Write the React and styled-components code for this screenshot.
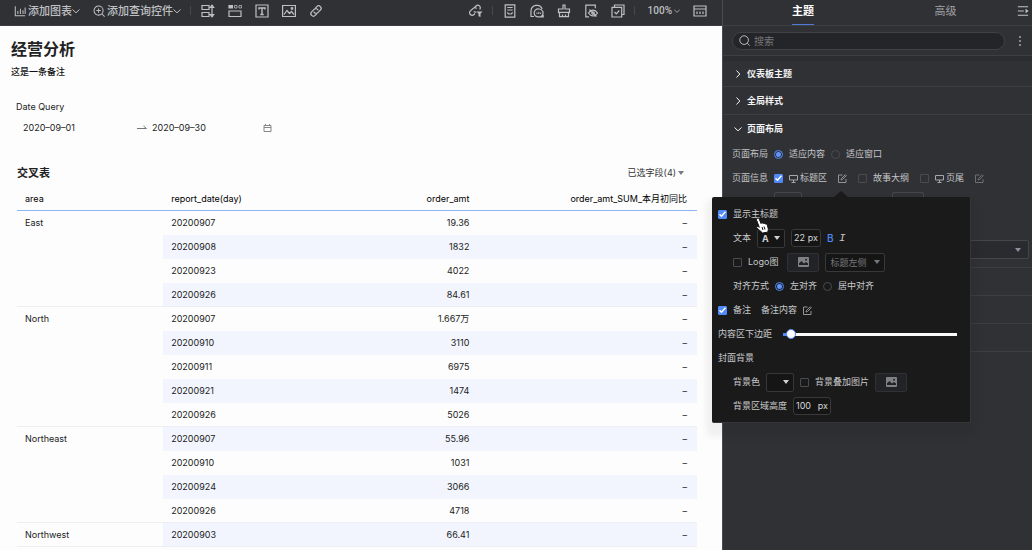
import React from "react";
import styled, { createGlobalStyle, css } from "styled-components";

const GlobalStyle = createGlobalStyle`
  * { box-sizing: border-box; }
  body {
    margin: 0;
    background: #303135;
    color: #222;
    font: 9px/24px Inter, "Noto Sans CJK SC", sans-serif;
    overflow: hidden;
  }
  button, input, select {
    font: inherit;
    color: inherit;
    margin: 0;
    padding: 0;
    border: 0;
    background: none;
  }
  h1, h2, h3, p { margin: 0; }
  svg { display: block; flex: none; }
`;

const Page = styled.div`
  display: grid;
  grid-template-columns: minmax(0, 1fr) 310px;
  height: 100vh;
  overflow: hidden;
`;

/* ---------- canvas side ---------- */

const Main = styled.main`
  background: #fdfdfd;
  overflow: hidden;
`;

const Toolbar = styled.header`
  display: flex;
  align-items: center;
  justify-content: space-between;
  height: 26px;
  padding: 0 15px 4px 14px;
  background: #303135;
  border-bottom: 1px solid #3b3c40;
  color: #bfc0c3;
`;

const ToolGroup = styled.div`
  display: flex;
  align-items: center;
  gap: 13px;
`;

const TextTool = styled.button`
  display: flex;
  align-items: center;
  gap: 2px;
  height: 16px;
  margin-left: ${(p) => (p.$latin ? 3 : 0)}px;
  font-family: ${(p) => (p.$latin ? "Roboto, sans-serif" : "inherit")};
  font-size: ${(p) => (p.$latin ? 10 : 11)}px;
  font-weight: 500;
  line-height: 16px;
  white-space: nowrap;
  span + svg { margin-left: -2px; }
`;

const IconTool = styled.button`
  display: flex;
  align-items: center;
  justify-content: center;
  width: 14px;
  height: 14px;
`;

const Divider = styled.i`
  width: 1px;
  height: 9px;
  margin: 0 -3px 0 -4px;
  background: #47484c;
`;

const Heading = styled.div`
  padding: 11px 11px 0;
  h1 { margin-bottom: 1px; font-size: 16px; line-height: 24px; font-weight: 700; color: #222; }
  p { line-height: 20px; font-weight: 500; color: #111; }
`;

const Query = styled.section`
  padding: 17px 16px 0;
  line-height: 16px;
`;

const DateRange = styled.div`
  display: flex;
  align-items: center;
  width: 256px;
  height: 16px;
  margin-top: 5px;
  padding-left: 7px;
  gap: 5px;
`;

const DateInput = styled.input`
  width: 109px;
  min-width: 0;
  height: 16px;
  outline: none;
  & + svg + & { width: 106px; }
`;

const Report = styled.section`
  padding: 27px 25px 0 17px;
`;

const ReportHead = styled.div`
  display: flex;
  justify-content: space-between;
  align-items: center;
  height: 20px;
  padding-right: 12px;
  h2 { font-size: 11px; line-height: 20px; font-weight: 700; }
`;

const FieldPicker = styled.button`
  display: flex;
  align-items: center;
  gap: 1px;
  line-height: 20px;
  color: #333;
`;

const DataTable = styled.table`
  width: 100%;
  margin-top: 4px;
  border-collapse: separate;
  border-spacing: 0;
  table-layout: fixed;
`;

const HeadCell = styled.th`
  height: 24px;
  padding: 0 10px 0 8px;
  border-bottom: 1px solid #8fb4f7;
  font-weight: 400;
  line-height: 22px;
  text-align: ${(p) => (p.$right ? "right" : "left")};
  white-space: nowrap;
  color: #000;
`;

const Cell = styled.td`
  height: 24px;
  padding: 0 10px 0 8px;
  line-height: 23px;
  vertical-align: top;
  text-align: ${(p) => (p.$right ? "right" : "left")};
  background: ${(p) => (p.$striped ? "#f2f5fe" : "transparent")};
  ${(p) => p.$last && css`border-bottom: 1px solid #eceef2;`}
`;

/* ---------- settings side ---------- */

const Side = styled.aside`
  position: relative;
  min-width: 0;
  background: #303135;
  border-left: 1px solid #4a4b4f;
  color: #c4c5c8;
`;

const Tabs = styled.nav`
  display: grid;
  grid-template-columns: 160px 1fr 24px;
  height: 26px;
  border-bottom: 1px solid #3e3f43;
`;

const Tab = styled.button`
  position: relative;
  padding-bottom: 2px;
  font-size: 11px;
  line-height: 21px;
  font-weight: ${(p) => (p.$active ? 700 : 400)};
  color: ${(p) => (p.$active ? "#fff" : "#a0a1a5")};
  &::after {
    content: "";
    position: absolute;
    left: 50%;
    bottom: 0;
    width: 22px;
    height: 1px;
    margin-left: -11px;
    background: ${(p) => (p.$active ? "#5279d8" : "transparent")};
  }
`;

const CollapseButton = styled.button`
  display: flex;
  align-items: center;
  justify-content: flex-end;
  padding: 0 3px 4px 0;
`;

const SearchRow = styled.div`
  display: flex;
  align-items: center;
  justify-content: space-between;
  height: 30px;
  padding: 0 10px 0 9px;
  border-bottom: 1px solid #3e3f43;
`;

const SearchBox = styled.label`
  display: flex;
  align-items: center;
  gap: 4px;
  flex: 1;
  height: 18px;
  margin-right: 13px;
  padding: 0 6px;
  border: 1px solid #404145;
  border-radius: 9px;
  background: #242528;
  input {
    flex: 1;
    min-width: 0;
    height: 16px;
    font-size: 10px;
    outline: none;
  }
  input::placeholder { color: #77787c; opacity: 1; }
`;

const Sections = styled.div`
  border-top: 5px solid #2c2d30;
`;

const SectionBar = styled.button`
  display: flex;
  align-items: center;
  gap: 5px;
  width: 100%;
  height: ${(p) => p.$height || 28}px;
  padding: 0 11px;
  border-top: 1px solid ${(p) => (p.$plain ? "transparent" : "#3d3e42")};
  font-weight: 700;
  line-height: 20px;
  color: #f4f4f5;
`;

const FormRow = styled.div`
  display: flex;
  align-items: center;
  height: 24px;
  padding-left: ${(p) => p.$indent || 0}px;
  gap: ${(p) => p.$gap || 6}px;
  white-space: nowrap;
`;

const SettingRows = styled.div`
  padding: 0 4px 0 9px;
`;

const Inline = styled.span`
  display: flex;
  align-items: center;
  gap: ${(p) => p.$gap || 2}px;
`;

const Option = styled.label`
  display: flex;
  align-items: center;
  gap: 6px;
  margin-right: ${(p) => p.$after || 0}px;
`;

const Check = styled.input.attrs({ type: "checkbox" })`
  appearance: none;
  flex: none;
  width: 9px;
  height: 9px;
  border: 1px solid #4a4b4f;
  border-radius: 1px;
  &:checked {
    border-color: #5189f8;
    background: #5189f8
      url("data:image/svg+xml,%3Csvg xmlns='http://www.w3.org/2000/svg' viewBox='0 0 9 9'%3E%3Cpath d='M1.5 4.2l2 2.1L7.4 1.8' fill='none' stroke='white' stroke-width='1.4'/%3E%3C/svg%3E")
      center / 9px 9px;
  }
`;

const Radio = styled.input.attrs({ type: "radio" })`
  appearance: none;
  flex: none;
  width: 9px;
  height: 9px;
  border: 1px solid #4a4b4f;
  border-radius: 50%;
  &:checked {
    border-color: #5189f8;
    background: radial-gradient(circle, #5f94fb 2px, transparent 3px);
  }
`;

const Picker = styled.button`
  display: flex;
  align-items: center;
  justify-content: ${(p) => (p.$end ? "flex-end" : "space-between")};
  width: ${(p) => p.$width}px;
  height: 19px;
  padding: 0 3px 0 4px;
  border: 1px solid #37383a;
  border-radius: 2px;
  line-height: 17px;
  color: ${(p) => (p.$dim ? "#77787a" : "#d0d1d3")};
  background: #151515;
`;

const WidePicker = styled(Picker)`
  width: 100%;
  padding-right: 6px;
  border-color: #44464a;
  background: #2a2b2e;
`;

const HiddenFields = styled.div`
  display: flex;
  gap: 90px;
  margin-top: 2px;
  padding-left: 51px;
  i {
    width: 28px;
    height: 18px;
    border: 1px solid #46474b;
    border-radius: 2px;
  }
  i + i { width: 32px; }
`;

const PickerSlot = styled.div`
  margin-top: 30px;
  padding: 0 3px 8px 9px;
`;

const SizeField = styled.label`
  display: flex;
  align-items: center;
  justify-content: space-between;
  width: ${(p) => p.$width}px;
  height: 18px;
  padding: 0 2px;
  border: 1px solid #38393b;
  border-radius: 3px;
  background: #151515;
  line-height: 16px;
  color: #d6d7d9;
  input { width: ${(p) => p.$inner}px; height: 16px; outline: none; }
`;

const ImageButton = styled.button`
  display: flex;
  align-items: center;
  justify-content: center;
  width: 32px;
  height: 19px;
  border: 1px solid #303136;
  border-radius: 2px;
  background: #222327;
`;

const StyleButton = styled.button`
  width: 6px;
  font-family: ${(p) => (p.$italic ? '"Liberation Mono", monospace' : "inherit")};
  font-size: ${(p) => (p.$italic ? 11 : 10)}px;
  font-style: ${(p) => (p.$italic ? "italic" : "normal")};
  font-weight: ${(p) => (p.$italic ? 400 : 500)};
  color: ${(p) => (p.$italic ? "#c4c5c8" : "#5189f8")};
`;

const Popover = styled.div`
  position: absolute;
  top: 197px;
  right: 61px;
  width: 259px;
  padding: 5px 5px 4px 6px;
  border: 1px solid #36373a;
  border-width: 0 1px 1px 0;
  border-radius: 2px;
  background: #1a1a1a;
  box-shadow: 0 8px 6px 6px rgba(0, 0, 0, 0.05);
  color: #c8c9cb;
  &::before {
    content: "";
    position: absolute;
    top: -6px;
    left: 122px;
    border: solid transparent;
    border-width: 0 7px 6px;
    border-bottom-color: #1a1a1a;
  }
`;

const Slider = styled.input.attrs({ type: "range" })`
  appearance: none;
  width: 174px;
  height: 12px;
  background: linear-gradient(to right, #5189f8 9px, #fafafa 9px) center / 100% 3px no-repeat;
  &::-webkit-slider-thumb {
    appearance: none;
    width: 10px;
    height: 10px;
    border: 1px solid #5189f8;
    border-radius: 50%;
    background: #fff;
  }
`;

const Pointer = styled.svg`
  position: absolute;
  top: 20px;
  left: 43px;
`;

/* ---------- icons ---------- */

const Icon = ({ size = 14, children, width = 1.2 }) => (
  <svg width={size} height={size} viewBox="0 0 14 14" fill="none" stroke="currentColor" strokeWidth={width}>
    {children}
  </svg>
);

const Chevron = ({ down, size = 8 }) => (
  <svg width={size} height={size} viewBox="0 0 8 8" fill="none" stroke="currentColor">
    <path d={down ? "M.5 2.5 4 5.8 7.5 2.5" : "M2.5.5 5.8 4 2.5 7.5"} />
  </svg>
);

const Caret = ({ color = "currentColor" }) => (
  <svg width="8" height="6" viewBox="0 0 8 6" fill={color}>
    <path d="M1 1h6L4 5z" />
  </svg>
);

const EditIcon = ({ dim }) => (
  <svg width="9" height="9" viewBox="0 0 9 9" fill="none" stroke={dim ? "#6f7074" : "#939497"}>
    <path d="M4.500 1h-4v7.500H8V5M3 6l.4-1.500L7.300.7l1 1-3.800 3.800z" />
  </svg>
);

const ScreenIcon = () => (
  <svg width="9" height="9" viewBox="0 0 9 9" fill="none" stroke="#a6a7aa">
    <path d="M.5 1.500h8v4.500h-8zM4.500 6v2M2.500 8.500h4" />
  </svg>
);

const PictureIcon = () => (
  <svg width="11" height="10" viewBox="0 0 11 10">
    <rect width="11" height="10" rx="1" fill="#808184" />
    <path d="M1 8V6.200l2.500-2.200 2.500 2.400L8 5l2 1.600V8z" fill="#222327" />
    <circle cx="8" cy="2.800" r="1" fill="#222327" />
  </svg>
);

const icons = {
  filter: (
    <>
      <path d="M1 1.500h7v4H1zM1 8.500h7v4H1z" />
      <path d="M11 1.500v11M8 3.500h5.500M8 10.500h5.500M9.500 2.800 11 1.100l1.500 1.700M9.500 11.200l1.500 1.700 1.500-1.700" />
    </>
  ),
  tabs: (
    <>
      <path d="M1 7h12v5.500H1z" />
      <path d="M.4 1H5v3.500H.4z" fill="currentColor" stroke="none" />
      <path d="M6.500 1.500H9V4H6.500zM11 1.500h2.500V4H11z" strokeWidth="1" opacity=".75" />
    </>
  ),
  text: <><path d="M1 1h12v12H1z" /><path d="M4 5.500V4h6v1.500M7 4v6.500M5.300 10.500h3.400" strokeWidth="1.400" /></>,
  image: <><path d="M.6 1.500h12.800v11H.6zM2 10.500l3-4 2.500 3 2-2 2.500 3" /><circle cx="10" cy="4.500" r=".8" /></>,
  link: (
    <g transform="rotate(-45 7 7)">
      <path d="M5.500 9.500H3.300a2.500 2.500 0 0 1 0-5h3.500a2.500 2.500 0 0 1 2.200 3.700" />
      <path d="M8.500 4.500h2.200a2.500 2.500 0 0 1 0 5H7.200A2.500 2.500 0 0 1 5 5.800" />
    </g>
  ),
  linkFilter: (
    <>
      <path d="m5 4 2-2a2.400 2.400 0 0 1 3.600 3.400M6 9.500l-1 1a2.500 2.500 0 0 1-3.600-3.600L4 4.500a2.500 2.500 0 0 1 3.600 0M4.800 7.400a2.400 2.400 0 0 0 2.500.6" />
      <path d="M7.500 7.500h6l-2 2.300V13l-2-.8V9.800z" fill="currentColor" stroke="none" />
    </>
  ),
  page: <path d="M2.200.8h9.600v12.400H2.200zM4.300 3.500h5.400M4.300 6h5.400M4.300 8.500l1.500 1.500h2.400l1.500-1.500" />,
  theme: (
    <>
      <path d="M4 12.500H1V7a5.800 5.800 0 0 1 11.200-2" />
      <path d="M8.800 5a4 4 0 1 0 0 7.900h4.400v-1.200H12A4 4 0 0 0 8.800 5z" />
      <path d="M7 8.500v1.500M8.800 7.800V10M10.600 8.500V10" strokeWidth="1" />
    </>
  ),
  brush: <path d="M6 1h2v4h4.500v3.300h-11V5H6zM2.500 8.300v4.400h9V8.300M5.500 12.700v-2.200M8.500 12.700v-2.200" />,
  preview: (
    <>
      <path d="M5 12.800H1.800V1.200h9.500v3" />
      <path d="M4.500 9s1.700-2.800 4.500-2.800S13.500 9 13.500 9s-1.700 2.800-4.500 2.800S4.500 9 4.500 9zM5.500 5.500l7 7" />
      <circle cx="9" cy="9" r="1.200" />
    </>
  ),
  select: <path d="M3.500 3V1H13v9.500h-2M1 3.300h9.700V13H1zM3.500 8l1.800 1.800 3-3.300" />,
  grid: <path d="M1 2h12v10H1zM1 5h12M4 7.500V10M7 7.500V10M10 7.500V10" />,
};

const leftTools = [["filter", "筛选"], ["tabs", "选项卡"], ["text", "文本"], ["image", "图片"], ["link", "链接"]];
const rightTools = [["page", "页面"], ["theme", "主题"], ["brush", "清空"], ["preview", "预览"], ["select", "批量选择"]];

/* ---------- data ---------- */

const groups = [
  { area: "East", rows: [["20200907", "19.36"], ["20200908", "1832"], ["20200923", "4022"], ["20200926", "84.61"]] },
  { area: "North", rows: [["20200907", "1.667万"], ["20200910", "3110"], ["20200911", "6975"], ["20200921", "1474"], ["20200926", "5026"]] },
  { area: "Northeast", rows: [["20200907", "55.96"], ["20200910", "1031"], ["20200924", "3066"], ["20200926", "4718"]] },
  { area: "Northwest", rows: [["20200903", "66.41"]] },
];

const Column = styled.col`
  width: ${(p) => p.$share};
`;

function ReportTable() {
  let index = 0;
  return (
    <DataTable>
      <colgroup>
        <Column $share="21.5%" />
        <Column $share="22.5%" />
        <Column $share="24%" />
        <Column $share="32%" />
      </colgroup>
      <thead>
        <tr>
          <HeadCell>area</HeadCell>
          <HeadCell>report_date(day)</HeadCell>
          <HeadCell $right>order_amt</HeadCell>
          <HeadCell $right>order_amt_SUM_本月初同比</HeadCell>
        </tr>
      </thead>
      <tbody>
        {groups.map((group) =>
          group.rows.map(([date, amount], i) => {
            const striped = index++ % 2 === 1;
            const last = i === group.rows.length - 1;
            return (
              <tr key={group.area + date}>
                {i === 0 && <Cell rowSpan={group.rows.length} $last>{group.area}</Cell>}
                <Cell $striped={striped} $last={last}>{date}</Cell>
                <Cell $striped={striped} $last={last} $right>{amount}</Cell>
                <Cell $striped={striped} $last={last} $right>–</Cell>
              </tr>
            );
          })
        )}
      </tbody>
    </DataTable>
  );
}

function TitlePopover() {
  return (
    <Popover>
      <FormRow><Option><Check defaultChecked />显示主标题</Option></FormRow>
      <FormRow $indent={15}>
        文本
        <Picker $width={28} aria-label="文字颜色"><b>A</b><Caret /></Picker>
        <SizeField $width={30} $inner={12}><input defaultValue="22" aria-label="字号" />px</SizeField>
        <StyleButton>B</StyleButton>
        <StyleButton $italic>I</StyleButton>
      </FormRow>
      <FormRow $indent={15}>
        <Option $after={3}><Check />Logo图</Option>
        <ImageButton aria-label="选择图片"><PictureIcon /></ImageButton>
        <Picker $width={60} $dim>标题左侧<Caret /></Picker>
      </FormRow>
      <FormRow $indent={15}>
        对齐方式
        <Option><Radio name="align" defaultChecked />左对齐</Option>
        <Option><Radio name="align" />居中对齐</Option>
      </FormRow>
      <FormRow>
        <Option $after={4}><Check defaultChecked />备注</Option>
        备注内容
        <EditIcon />
      </FormRow>
      <FormRow $gap={11}>
        <label htmlFor="margin">内容区下边距</label>
        <Slider id="margin" defaultValue="2" />
      </FormRow>
      <FormRow>封面背景</FormRow>
      <FormRow $indent={15}>
        背景色
        <Picker $width={28} $end aria-label="背景色"><Caret /></Picker>
        <Option><Check />背景叠加图片</Option>
        <ImageButton aria-label="选择背景图片"><PictureIcon /></ImageButton>
      </FormRow>
      <FormRow $indent={15}>
        背景区域高度
        <SizeField $width={38} $inner={19}><input defaultValue="100" aria-label="背景区域高度" />px</SizeField>
      </FormRow>
      <Pointer width="15" height="17" viewBox="0 0 15 17" fill="#fff" stroke="#111">
        <path d="M2 1.500c1-.9 2 0 2.300.8L6 6.500c.6-1 1.700-.8 2.200.1.800-.7 1.700-.4 2.100.5.900-.5 1.800.1 2 1l.9 3.300c.3 1.600-.2 2.500-.6 3.800L7.500 16c-1.700-2-3.800-3-5.700-5.200-.6-.9.500-1.900 1.600-1.100l.9.600L1.600 3.200c-.3-.7-.2-1.300.4-1.700z" />
        <path d="m7 10 1 3M9 9.500l1 3" />
      </Pointer>
    </Popover>
  );
}

export default function App() {
  return (
    <Page>
      <GlobalStyle />
      <Main>
        <Toolbar>
          <ToolGroup>
            <TextTool>
              <Icon size={12}><path d="M1.500 1.500v11H13M4.500 10.500V7M7.500 10.500V4.500M10.500 10.500V6M13 10.500V3" /></Icon>
              <span>添加图表</span><Chevron down />
            </TextTool>
            <TextTool>
              <Icon size={12}><circle cx="6.500" cy="6.500" r="5.300" /><path d="M6.500 4v5M4 6.500h5M10.500 10.500l3 3" /></Icon>
              <span>添加查询控件</span><Chevron down />
            </TextTool>
            <Divider />
            {leftTools.map(([name, label]) => (
              <IconTool key={name} aria-label={label}><Icon>{icons[name]}</Icon></IconTool>
            ))}
          </ToolGroup>
          <ToolGroup>
            <IconTool aria-label="联动"><Icon>{icons.linkFilter}</Icon></IconTool>
            <Divider />
            {rightTools.map(([name, label]) => (
              <IconTool key={name} aria-label={label}><Icon>{icons[name]}</Icon></IconTool>
            ))}
            <Divider />
            <TextTool $latin>100%<Chevron down size={6} /></TextTool>
            <IconTool aria-label="布局"><Icon>{icons.grid}</Icon></IconTool>
          </ToolGroup>
        </Toolbar>
        <Heading>
          <h1>经营分析</h1>
          <p>这是一条备注</p>
        </Heading>
        <Query>
          Date Query
          <DateRange>
            <DateInput defaultValue="2020–09–01" aria-label="开始日期" />
            <svg width="10" height="6" viewBox="0 0 10 6" fill="none" stroke="#777"><path d="M0 3.500h9.500L6.500 1" /></svg>
            <DateInput defaultValue="2020–09–30" aria-label="结束日期" />
            <svg width="9" height="9" viewBox="0 0 9 9" fill="none" stroke="#888"><path d="M1 1.500h7v6H1zM1 3.500h7M2.500 0v2M6.500 0v2" /></svg>
          </DateRange>
        </Query>
        <Report>
          <ReportHead>
            <h2>交叉表</h2>
            <FieldPicker>已选字段(4)<Caret color="#777b88" /></FieldPicker>
          </ReportHead>
          <ReportTable />
        </Report>
      </Main>
      <Side>
        <Tabs>
          <Tab $active>主题</Tab>
          <Tab>高级</Tab>
          <CollapseButton aria-label="收起">
            <Icon size={12}><path d="M1 2h12M1 7h7M1 12h12" /><path d="m10 4.500 3.500 2.500-3.500 2.500z" fill="currentColor" stroke="none" /></Icon>
          </CollapseButton>
        </Tabs>
        <SearchRow>
          <SearchBox>
            <Icon size={11}><circle cx="6.500" cy="6.500" r="5.500" /><path d="m10.500 10.500 3 3" /></Icon>
            <input placeholder="搜索" aria-label="搜索" />
          </SearchBox>
          <svg width="4" height="10" viewBox="0 0 4 10" fill="#85868a"><path d="M1 0h2v2H1zM1 4h2v2H1zM1 8h2v2H1z" /></svg>
        </SearchRow>
        <Sections>
          <SectionBar $plain $height={25}><Chevron />仪表板主题</SectionBar>
          <SectionBar><Chevron />全局样式</SectionBar>
          <SectionBar><Chevron down />页面布局</SectionBar>
          <SettingRows>
            <FormRow>
              页面布局
              <Option><Radio name="layout" defaultChecked />适应内容</Option>
              <Option><Radio name="layout" />适应窗口</Option>
            </FormRow>
            <FormRow $gap={11}>
              <Inline $gap={6}>
                页面信息
                <Option><Check defaultChecked /><Inline><ScreenIcon />标题区</Inline></Option>
              </Inline>
              <EditIcon />
              <Option><Check />故事大纲</Option>
              <Option><Check /><Inline><ScreenIcon />页尾</Inline></Option>
              <EditIcon dim />
            </FormRow>
          </SettingRows>
          <HiddenFields><i /><i /></HiddenFields>
          <PickerSlot><WidePicker $end aria-label="页面宽度"><Caret color="#8b90a0" /></WidePicker></PickerSlot>
          <SectionBar aria-label="图表样式" />
          <SectionBar aria-label="控件样式" />
          <SectionBar aria-label="交互设置" />
          <SectionBar aria-label="其他设置" />
        </Sections>
        <TitlePopover />
      </Side>
    </Page>
  );
}
